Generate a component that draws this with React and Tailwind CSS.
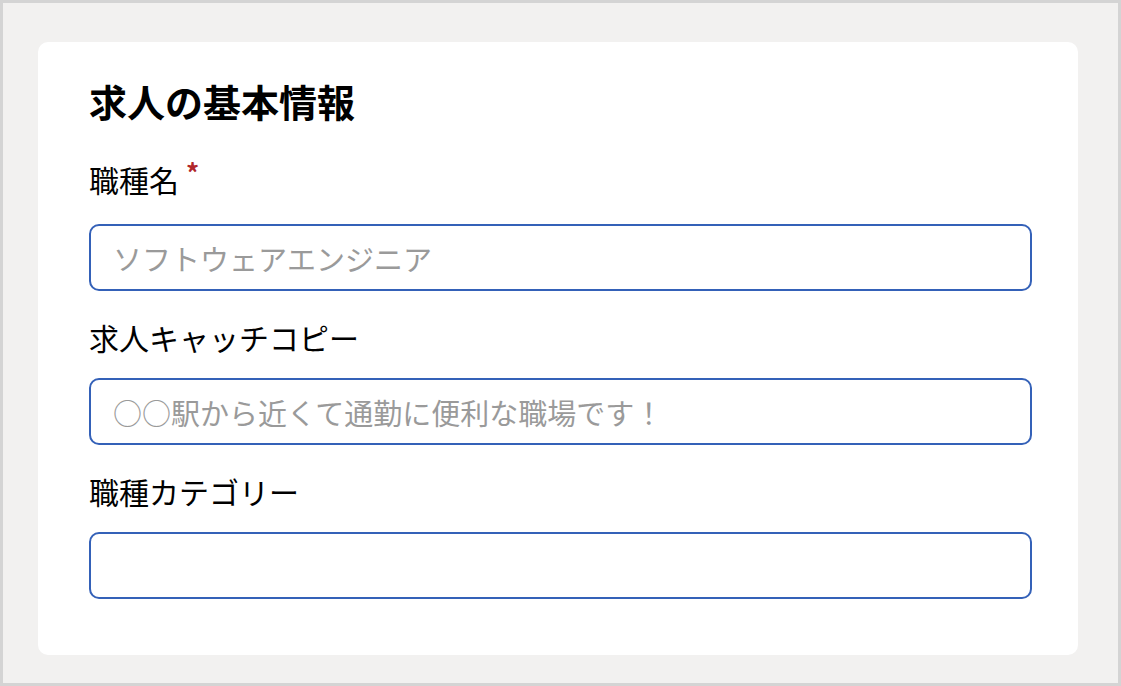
import React from "react";

const font = { fontFamily: '"Noto Sans CJK JP", "Noto Sans", sans-serif' };

function Field({ label, required, placeholder, first }) {
  return (
    <div className="flex flex-col">
      <label className="h-[43px] pt-[3px] text-[30px] leading-[40px] text-black">
        {label}
        {required && (
          <span className="relative top-[-9px] ml-[7px] text-[26px] font-bold leading-none text-[#b0272b]">*</span>
        )}
      </label>
      <input
        type="text"
        placeholder={placeholder}
        className={`${first ? "mt-[25px]" : "mt-[21px]"} h-[67px] w-full rounded-[10px] border-2 border-[#3461b8] bg-white px-[22px] text-[29px] text-black outline-none placeholder:text-[#9a9a9a]`}
      />
    </div>
  );
}

export default function App() {
  return (
    <div
      className="flex h-[686px] w-[1121px] border-[3px] border-[#d4d4d4] bg-[#f2f1f0] pl-[35px] pr-[40px] pt-[39px] pb-[28px]"
      style={font}
    >
      <div className="flex w-full flex-col rounded-[10px] bg-white pl-[51px] pr-[46px] pt-[35px]">
        <h1 className="text-[38px] font-bold leading-[48px] text-black">求人の基本情報</h1>
        <div className="mt-[31px] flex flex-col gap-[23px]">
          <Field label="職種名" required first placeholder="ソフトウェアエンジニア" />
          <Field label="求人キャッチコピー" placeholder="○○駅から近くて通勤に便利な職場です！" />
          <Field label="職種カテゴリー" placeholder="" />
        </div>
      </div>
    </div>
  );
}
